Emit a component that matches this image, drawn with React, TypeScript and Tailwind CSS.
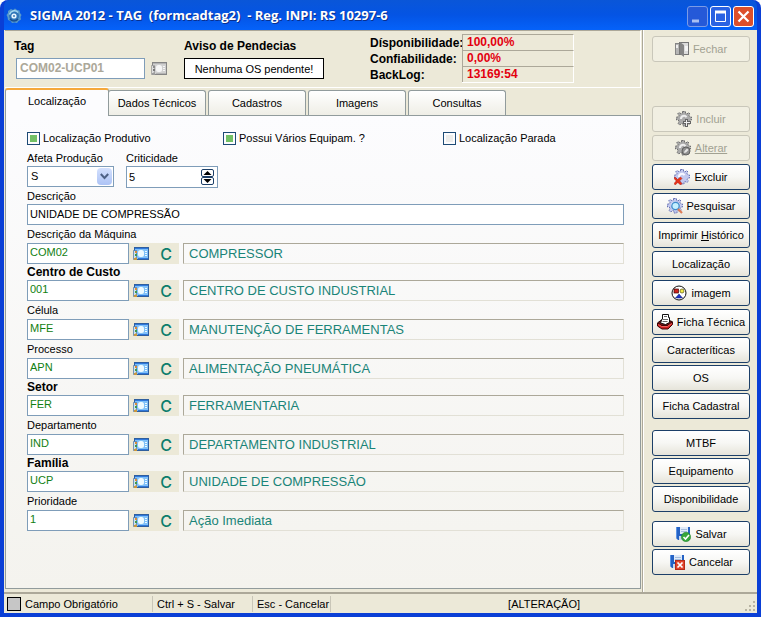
import { useState, type ReactNode } from 'react';
import { clsx } from 'clsx';

const tabs = ['Localização', 'Dados Técnicos', 'Cadastros', 'Imagens', 'Consultas'];

const lookups = [
  { id: 'maquina', label: 'Descrição da Máquina', code: 'COM02', name: 'COMPRESSOR' },
  { id: 'custo', label: 'Centro de Custo', code: '001', name: 'CENTRO DE CUSTO INDUSTRIAL', bold: true },
  { id: 'celula', label: 'Célula', code: 'MFE', name: 'MANUTENÇÃO DE FERRAMENTAS' },
  { id: 'processo', label: 'Processo', code: 'APN', name: 'ALIMENTAÇÃO PNEUMÁTICA' },
  { id: 'setor', label: 'Setor', code: 'FER', name: 'FERRAMENTARIA', bold: true },
  { id: 'departamento', label: 'Departamento', code: 'IND', name: 'DEPARTAMENTO INDUSTRIAL' },
  { id: 'familia', label: 'Família', code: 'UCP', name: 'UNIDADE DE COMPRESSÃO', bold: true },
  { id: 'prioridade', label: 'Prioridade', code: '1', name: 'Ação Imediata' },
];

const stats = [
  { label: 'Dísponibilidade:', value: '100,00%' },
  { label: 'Confiabilidade:', value: '0,00%' },
  { label: 'BackLog:', value: '13169:54' },
];

function AppIcon() {
  return (
    <svg width="16" height="16" viewBox="0 0 16 16" aria-hidden="true">
      <path d="M5 1l2 1 2-1.500 2 1.500 2.500.5.5 2.500 1.500 2-1 2 .5 2.500-2.500 1.500-1.500 2-2.500-.5-2.500.5-1.500-2-2.500-1L1.500 9 .5 7l1.500-2L2 3z" fill="#5a9bcb" />
      <circle cx="8" cy="8" r="5" fill="#2f76b8" />
      <path d="M3.500 6.500a5 5 0 0 1 8.500-2" fill="none" stroke="#a4d8f0" strokeWidth="1.500" />
      <path d="M4 11a5 5 0 0 0 8 0" fill="none" stroke="#174f93" strokeWidth="1.500" />
      <circle cx="8" cy="8" r="2.600" fill="#e8f6ff" />
      <circle cx="8" cy="8" r="1" fill="#3c7cb5" />
    </svg>
  );
}

function CardIcon({ gray = false }: { gray?: boolean }) {
  const c = gray
    ? { edge: '#858585', top: '#b4b4b4', fill: '#d0d0d0', light: '#f6f6f6', hand: '#9c9c9c', dot: '#8c8c8c', bit: '#777777', page: '#dedede' }
    : { edge: '#2f5f9e', top: '#2f78dc', fill: '#7fc0f8', light: '#eefaff', hand: '#c9973f', dot: '#d98a35', bit: '#3f9a4b', page: '#cfe4ee' };
  return (
    <svg width="16" height="14" viewBox="0 0 16 14" aria-hidden="true">
      <rect x="1.500" y="0.500" width="14" height="12" fill={c.fill} stroke={c.edge} />
      <rect x="2" y="1" width="13" height="1" fill={c.top} />
      <rect x="5" y="3" width="6" height="7" rx="2.500" fill={c.light} />
      <path d="M12 4.500h2M12 6.500h2M12 8.500h2" stroke={c.light} />
      <path d="M5 11.500h10" stroke={c.top} />
      <path d="M0.500 3.500h3v9h-3z" fill={c.page} stroke={c.edge} strokeOpacity="0.6" />
      <rect x="2" y="4" width="2" height="2" fill={c.dot} />
      <rect x="2" y="7" width="2" height="2" fill={c.bit} />
      <path d="M1 13v-2h1l1-1 1 1v2z" fill={c.hand} />
    </svg>
  );
}

const gearPath =
  'M6.500 0.500h3v2l1.500.5 1.500-1.500 1.500 1.500-1 1.500 1 1.500h1.500v3H14l-.8 1.500 1.300 1.500-1.500 1.500-2-1-1 .5v2H7v-2l-1.500-.5-1.500 1.500-2-1.500 1-1.800L2.300 9H.5V6h2L3 4.500 1.500 3 3 1.500l2 1.200 1.500-.5z';

function GearIcon({ kind }: { kind: 'add' | 'edit' | 'delete' | 'search' }) {
  const gray = kind === 'add' || kind === 'edit';
  return (
    <svg width="16" height="16" viewBox="0 0 16 16" aria-hidden="true">
      <path d={gearPath} fill={gray ? '#aaaaaa' : '#c3c9ef'} stroke={gray ? '#6f6f6f' : '#6a75b5'} strokeDasharray="2 1" />
      <path d="M5 8a3 3 0 0 1 5.500-1.800" fill="none" stroke={gray ? '#ededed' : '#f7f8ff'} strokeWidth="2" />
      {kind === 'add' && (
        <>
          <path d="M9 8h3v2h3v3h-3v3H9v-3H7v-3h2z" fill="#646464" />
          <path d="M10.500 9v6M8 11.500h6" stroke="#efefef" />
        </>
      )}
      {kind === 'edit' && (
        <>
          <circle cx="11" cy="11" r="4" fill="#8f8f8f" stroke="#5f5f5f" />
          <path d="M9 13l.5-2L12 8.500l1.500 1.500L11 12.500z" fill="#e6e6e6" />
        </>
      )}
      {kind === 'delete' && (
        <path
          d="M1 8l2.500 2.500L6.500 8l1.500 1.500-2.500 2.500L8 14.500 6.500 16l-2.700-2.500L1.200 16 0 14.500 2.300 12 0 9.500z"
          fill="#e8321a"
          stroke="#b62211"
          strokeWidth="0.500"
        />
      )}
      {kind === 'search' && (
        <>
          <circle cx="8.500" cy="8" r="3.700" fill="#c4f0ff" stroke="#3f8ccc" strokeWidth="1.300" />
          <path d="M11 11l4 4" stroke="#de7b55" strokeWidth="2.200" />
        </>
      )}
    </svg>
  );
}

function DoorIcon() {
  return (
    <svg width="14" height="16" viewBox="0 0 14 16" aria-hidden="true">
      <rect x="0.500" y="2.500" width="4" height="11" fill="#b5b5b5" stroke="#858585" />
      <rect x="4.500" y="1.500" width="9" height="12" fill="#dcdcdc" stroke="#777777" />
      <path d="M5 1l4 3v12l-4-3z" fill="#858585" />
      <path d="M10 5h3v5h-3z" fill="#f5f5f5" />
      <path d="M1 4h2v3H1z" fill="#eeeeee" />
    </svg>
  );
}

function ShapesIcon() {
  return (
    <svg width="16" height="16" viewBox="0 0 16 16" aria-hidden="true">
      <circle cx="8" cy="8" r="7" fill="#ffffff" stroke="#111111" />
      <rect x="3" y="4" width="4.500" height="4" fill="#d0231c" stroke="#3c0505" strokeWidth="0.700" />
      <circle cx="11" cy="6" r="2" fill="#f4ec48" stroke="#55500a" strokeWidth="0.700" />
      <path d="M8 9l3.500 4h-7z" fill="#1d35c9" stroke="#0b1668" strokeWidth="0.500" />
    </svg>
  );
}

function TrayIcon() {
  return (
    <svg width="16" height="16" viewBox="0 0 16 16" aria-hidden="true">
      <path d="M1 8.500L4.500 6 14 7l1.500 1-5 4.500h-6z" fill="#7a1010" stroke="#1d0202" />
      <path d="M5.500 0.500h6v3h1v5l-4 2-5-1.500 1.500-4h.5z" fill="#ffffff" stroke="#111111" />
      <path d="M7 2.500h3M6 5.500h5M5.500 7.500h5" stroke="#666666" />
      <path d="M0.500 9l4 2.500h6l5-3.500v2.500l-4.500 4.500H5l-4.500-3z" fill="#cf1f22" stroke="#3d0404" />
      <path d="M1.500 10.500l3 2h6l4-3" fill="none" stroke="#f2635d" />
    </svg>
  );
}

function DiskIcon({ ok }: { ok: boolean }) {
  return (
    <svg width="16" height="16" viewBox="0 0 16 16" aria-hidden="true">
      <path d="M1 1h14v13H3l-2-2z" fill="#2462c4" />
      <path d="M1.500 1v11" stroke="#5b93e4" />
      <rect x="5" y="1" width="8" height="7" fill="#dfeaf8" />
      <path d="M6 3.500h6M6 5.500h6" stroke="#a5bddd" />
      <rect x="4" y="10" width="4" height="4" fill="#c9d8ec" />
      {ok ? (
        <>
          <circle cx="11" cy="11" r="4.700" fill="#37a63a" stroke="#1d7c26" strokeWidth="0.500" />
          <path d="M8.500 11l2 2 3.500-4" fill="none" stroke="#ffffff" strokeWidth="1.600" />
        </>
      ) : (
        <>
          <rect x="6.500" y="6.500" width="9" height="9" fill="#e2452c" stroke="#b52a17" />
          <path d="M8.500 8.500l5 5M13.500 8.500l-5 5" stroke="#ffffff" strokeWidth="1.700" />
        </>
      )}
    </svg>
  );
}

function WindowButton({ label, className, children }: { label: string; className: string; children: ReactNode }) {
  return (
    <button type="button" aria-label={label} className={clsx('flex size-[21px] items-center justify-center rounded-[3px] border', className)}>
      <svg width="19" height="19" viewBox="0 0 19 19" aria-hidden="true">
        {children}
      </svg>
    </button>
  );
}

function SideButton({ icon, disabled, children }: { icon?: ReactNode; disabled?: boolean; children: ReactNode }) {
  return (
    <button
      type="button"
      disabled={disabled}
      className={clsx(
        'flex h-[26px] w-full items-center justify-center gap-1 rounded-[3px] border whitespace-nowrap',
        disabled
          ? 'border-[#c9c7ba] bg-[#f1efe2] text-[#a1a192]'
          : 'border-[#1c3f68] bg-linear-to-b from-white via-[#f7f7f4] to-[#e6e4da] text-black',
      )}
    >
      {icon}
      <span>{children}</span>
    </button>
  );
}

function Check({ label, checked }: { label: string; checked?: boolean }) {
  return (
    <label className="flex items-center gap-[3px]">
      <input
        type="checkbox"
        defaultChecked={checked}
        className="size-[13px] appearance-none border border-[#1d4a75] bg-[#ececea] bg-clip-content p-0.5 checked:bg-[#72c065]"
      />
      {label}
    </label>
  );
}

function LookupRow({ row }: { row: (typeof lookups)[number] }) {
  return (
    <div>
      <label htmlFor={row.id} className={clsx('block', row.bold ? 'h-4 text-xs leading-4 font-bold' : 'h-[18px] leading-[18px]')}>
        {row.label}
      </label>
      <div className="flex h-[21px] items-stretch">
        <input id={row.id} defaultValue={row.code} className="w-[102px] border border-[#7f9db9] bg-white px-[2px] pb-[2px] text-[#118011]" />
        <div className="mr-1 flex w-[50px] items-center gap-[11px] bg-[#ece9d8] pl-1">
          <button type="button" aria-label={`Pesquisar ${row.label}`}>
            <CardIcon />
          </button>
          <button type="button" className="w-3 text-center font-['Inter',sans-serif] text-base leading-5 font-medium text-[#0b7d6c]">
            C
          </button>
        </div>
        <output htmlFor={row.id} className="flex-1 border border-t-[#aca899] border-r-[#e2e0d6] border-b-[#e2e0d6] border-l-[#aca899] pl-[5px] text-[13px] leading-5 text-[#1a8478]">
          {row.name}
        </output>
      </div>
    </div>
  );
}

function TitleBar() {
  return (
    <header className="flex h-[30px] items-center rounded-t-md bg-linear-to-b from-[#0a56d8] via-[#0454e4] to-[#0562fa] pt-0.5 pr-[3px] pl-0.5">
      <AppIcon />
      <h1 className="ml-2 flex-1 font-['Open_Sans',sans-serif] text-[13px] font-bold whitespace-pre text-white [text-shadow:1px_1px_#0a2f8c]">
        {'SIGMA 2012 - TAG  (formcadtag2)  - Reg. INPI: RS 10297-6'}
      </h1>
      <div className="flex gap-[2px]">
        <WindowButton label="Minimizar" className="border-[#7b9be6] bg-[#2559d8]">
          <path d="M4 14h7" stroke="#a9bff2" strokeWidth="3" />
        </WindowButton>
        <WindowButton label="Maximizar" className="border-white bg-[#2a62e2]">
          <path d="M4.500 5v9.500h10V5" fill="none" stroke="#ffffff" />
          <path d="M4 5h11" stroke="#ffffff" strokeWidth="3" />
        </WindowButton>
        <WindowButton label="Fechar janela" className="border-white bg-[#dc4f2b]">
          <path d="M4.500 4.500l10 10M14.500 4.500l-10 10" stroke="#ffffff" strokeWidth="2.200" />
        </WindowButton>
      </div>
    </header>
  );
}

function TagHeader() {
  return (
    <section className="mr-px flex h-[58px] border-t border-r border-b border-t-[#aca899] border-r-white border-b-white pt-[2px] pl-[9px]">
      <div className="w-[170px] pt-1">
        <label htmlFor="tag" className="block h-[21px] text-xs leading-[18px] font-bold">
          Tag
        </label>
        <div className="ml-0.5 flex items-center gap-1.5">
          <input
            id="tag"
            disabled
            defaultValue="COM02-UCP01"
            className="h-[21px] w-[129px] border border-[#7f9db9] bg-white px-[3px] pb-[2px] text-xs font-bold text-[#aca899]"
          />
          <button type="button" aria-label="Pesquisar tag" disabled>
            <CardIcon gray />
          </button>
        </div>
      </div>
      <div className="w-[186px] pt-1">
        <h2 className="h-[21px] text-xs leading-[18px] font-bold">Aviso de Pendecias</h2>
        <p className="h-[21px] w-[140px] border border-black bg-white text-center leading-5">Nenhuma OS pendente!</p>
      </div>
      <dl className="pt-px">
        {stats.map((s) => (
          <div key={s.label} className="flex h-4 text-xs leading-4 font-bold">
            <dt className="w-[92px] pt-px whitespace-nowrap">{s.label}</dt>
            <dd className="w-[112px] border-t border-r border-l border-t-[#aca899] border-r-white border-l-[#aca899] pl-1 leading-[15px] text-[#e3000f]">
              {s.value}
            </dd>
          </div>
        ))}
        <div className="ml-[92px] border-t border-white" />
      </dl>
    </section>
  );
}

function Localizacao() {
  const [level, setLevel] = useState(5);
  return (
    <form className="flex-1 border border-[#919b9c] bg-linear-to-b from-[#fcfcfe] to-[#f4f3ee] pr-4 pl-[21px]">
      <div className="grid h-[44px] grid-cols-[196px_220px_1fr] items-center">
        <Check label="Localização Produtivo" checked />
        <Check label="Possui Vários Equipam. ?" checked />
        <Check label="Localização Parada" />
      </div>
      <div className="-mt-1 flex gap-3">
        <div>
          <label htmlFor="afeta" className="block h-[10px] leading-[4px]">
            Afeta Produção
          </label>
          <div className="relative w-[87px]">
            <select id="afeta" className="h-[21px] w-full appearance-none border border-[#7f9db9] bg-white px-[3px]">
              <option>S</option>
            </select>
            <span className="pointer-events-none absolute top-[2px] right-[2px] flex h-[17px] w-[15px] items-center justify-center rounded-sm bg-linear-to-b from-[#d3e0fd] to-[#adc3f5]">
              <svg width="9" height="7" viewBox="0 0 9 7" aria-hidden="true">
                <path d="M0.800 1l3.700 4 3.700-4" fill="none" stroke="#4d6185" strokeWidth="2" />
              </svg>
            </span>
          </div>
        </div>
        <div>
          <label htmlFor="criticidade" className="block h-[10px] leading-[4px]">
            Criticidade
          </label>
          <div className="flex h-[22px] w-[92px] items-center border border-[#7f9db9] bg-white pr-[3px]">
            <input
              id="criticidade"
              inputMode="numeric"
              value={level}
              onChange={(e) => setLevel(Number(e.target.value) || 0)}
              className="min-w-0 flex-1 px-[2px]"
            />
            <div className="flex flex-col">
              <button type="button" aria-label="Aumentar" onClick={() => setLevel(level + 1)} className="rounded-xs border border-[#1c3f68] px-px">
                <svg width="9" height="6" viewBox="0 0 9 6" aria-hidden="true">
                  <path d="M4.500 1L8.500 5h-8z" fill="#000000" />
                </svg>
              </button>
              <button type="button" aria-label="Diminuir" onClick={() => setLevel(level - 1)} className="rounded-xs border border-[#1c3f68] px-px">
                <svg width="9" height="6" viewBox="0 0 9 6" aria-hidden="true">
                  <path d="M4.500 5L8.500 1h-8z" fill="#000000" />
                </svg>
              </button>
            </div>
          </div>
        </div>
      </div>
      <label htmlFor="descricao" className="block h-4 pt-0.5 leading-3">
        Descrição
      </label>
      <input id="descricao" defaultValue="UNIDADE DE COMPRESSÃO" className="block h-[21px] w-full border border-[#7f9db9] bg-white px-[2px] pb-[2px]" />
      {lookups.map((row) => (
        <LookupRow key={row.id} row={row} />
      ))}
    </form>
  );
}

function Sidebar() {
  return (
    <aside className="w-[114px] border-l border-white pt-1.5 pr-[7px] pl-2">
      <SideButton disabled icon={<DoorIcon />}>Fechar</SideButton>
      <div className="mt-11 flex flex-col gap-[3px]">
        <SideButton disabled icon={<GearIcon kind="add" />}>Incluir</SideButton>
        <SideButton disabled icon={<GearIcon kind="edit" />}>
          <u>Alterar</u>
        </SideButton>
        <SideButton icon={<GearIcon kind="delete" />}>Excluir</SideButton>
        <SideButton icon={<GearIcon kind="search" />}>Pesquisar</SideButton>
        <SideButton>
          Imprimir <u>H</u>istórico
        </SideButton>
        <SideButton>Localização</SideButton>
        <SideButton icon={<ShapesIcon />}>imagem</SideButton>
        <SideButton icon={<TrayIcon />}>Ficha Técnica</SideButton>
      </div>
      <div className="mt-0.5 flex flex-col gap-0.5">
        <SideButton>Caracteríticas</SideButton>
        <SideButton>OS</SideButton>
        <SideButton>Ficha Cadastral</SideButton>
      </div>
      <div className="mt-[11px] flex flex-col gap-0.5">
        <SideButton>MTBF</SideButton>
        <SideButton>Equipamento</SideButton>
        <SideButton>Disponibilidade</SideButton>
      </div>
      <div className="mt-[9px] flex flex-col gap-0.5">
        <SideButton icon={<DiskIcon ok />}>Salvar</SideButton>
        <SideButton icon={<DiskIcon ok={false} />}>Cancelar</SideButton>
      </div>
    </aside>
  );
}

function StatusBar() {
  return (
    <footer className="flex h-[21px] items-center border-t-2 border-[#aca899] bg-[#ece9d8] leading-4">
      <div className="flex w-[149px] items-center gap-1 border-r border-[#c9c6b8] pl-[3px]">
        <span className="size-[14px] border border-black bg-[#c6c6c6]" />
        Campo Obrigatório
      </div>
      <div className="w-[100px] border-r border-[#c9c6b8] pl-1 whitespace-nowrap">Ctrl + S - Salvar</div>
      <div className="border-r border-[#c9c6b8] pr-px pl-1 whitespace-nowrap">Esc - Cancelar</div>
      <div className="flex-1 text-center">[ALTERAÇÃO]</div>
      <svg width="12" height="12" viewBox="0 0 12 12" className="-ml-3 self-end" aria-hidden="true">
        <path d="M8 0h2v2H8zM4 4h2v2H4zM8 4h2v2H8zM0 8h2v2H0zM4 8h2v2H4zM8 8h2v2H8z" fill="#b8b4a3" />
      </svg>
    </footer>
  );
}

export default function App() {
  const [active, setActive] = useState(tabs[0]);
  return (
    <div className="flex min-h-screen flex-col rounded-t-lg border-r-4 border-b-4 border-l-4 border-[#0a3fd6] bg-[#0a3fd6] font-['Liberation_Sans',Arial,sans-serif] text-[11px] text-black">
      <TitleBar />
      <div className="flex flex-1 bg-[#ece9d8]">
        <main className="flex min-w-0 flex-1 flex-col border-r border-[#aca899] pb-[3px] pl-px">
          <TagHeader />
          <div role="tablist" className="flex h-[27px] items-end gap-[2px]">
            {tabs.map((t) => (
              <button
                key={t}
                type="button"
                role="tab"
                aria-selected={t === active}
                onClick={() => setActive(t)}
                className={clsx(
                  'rounded-t-[3px] border-x border-[#919b9c]',
                  t === active
                    ? 'relative -mr-[3px] -mb-px h-[28px] w-[104px] border-t-2 border-t-[#f5a83c] bg-[#fcfcfe] pb-1'
                    : 'h-[25px] w-[98px] border-t bg-linear-to-b from-white to-[#efeee6]',
                )}
              >
                {t}
              </button>
            ))}
          </div>
          <div className="mr-px flex flex-1 flex-col">
            <Localizacao />
          </div>
        </main>
        <Sidebar />
      </div>
      <StatusBar />
    </div>
  );
}
